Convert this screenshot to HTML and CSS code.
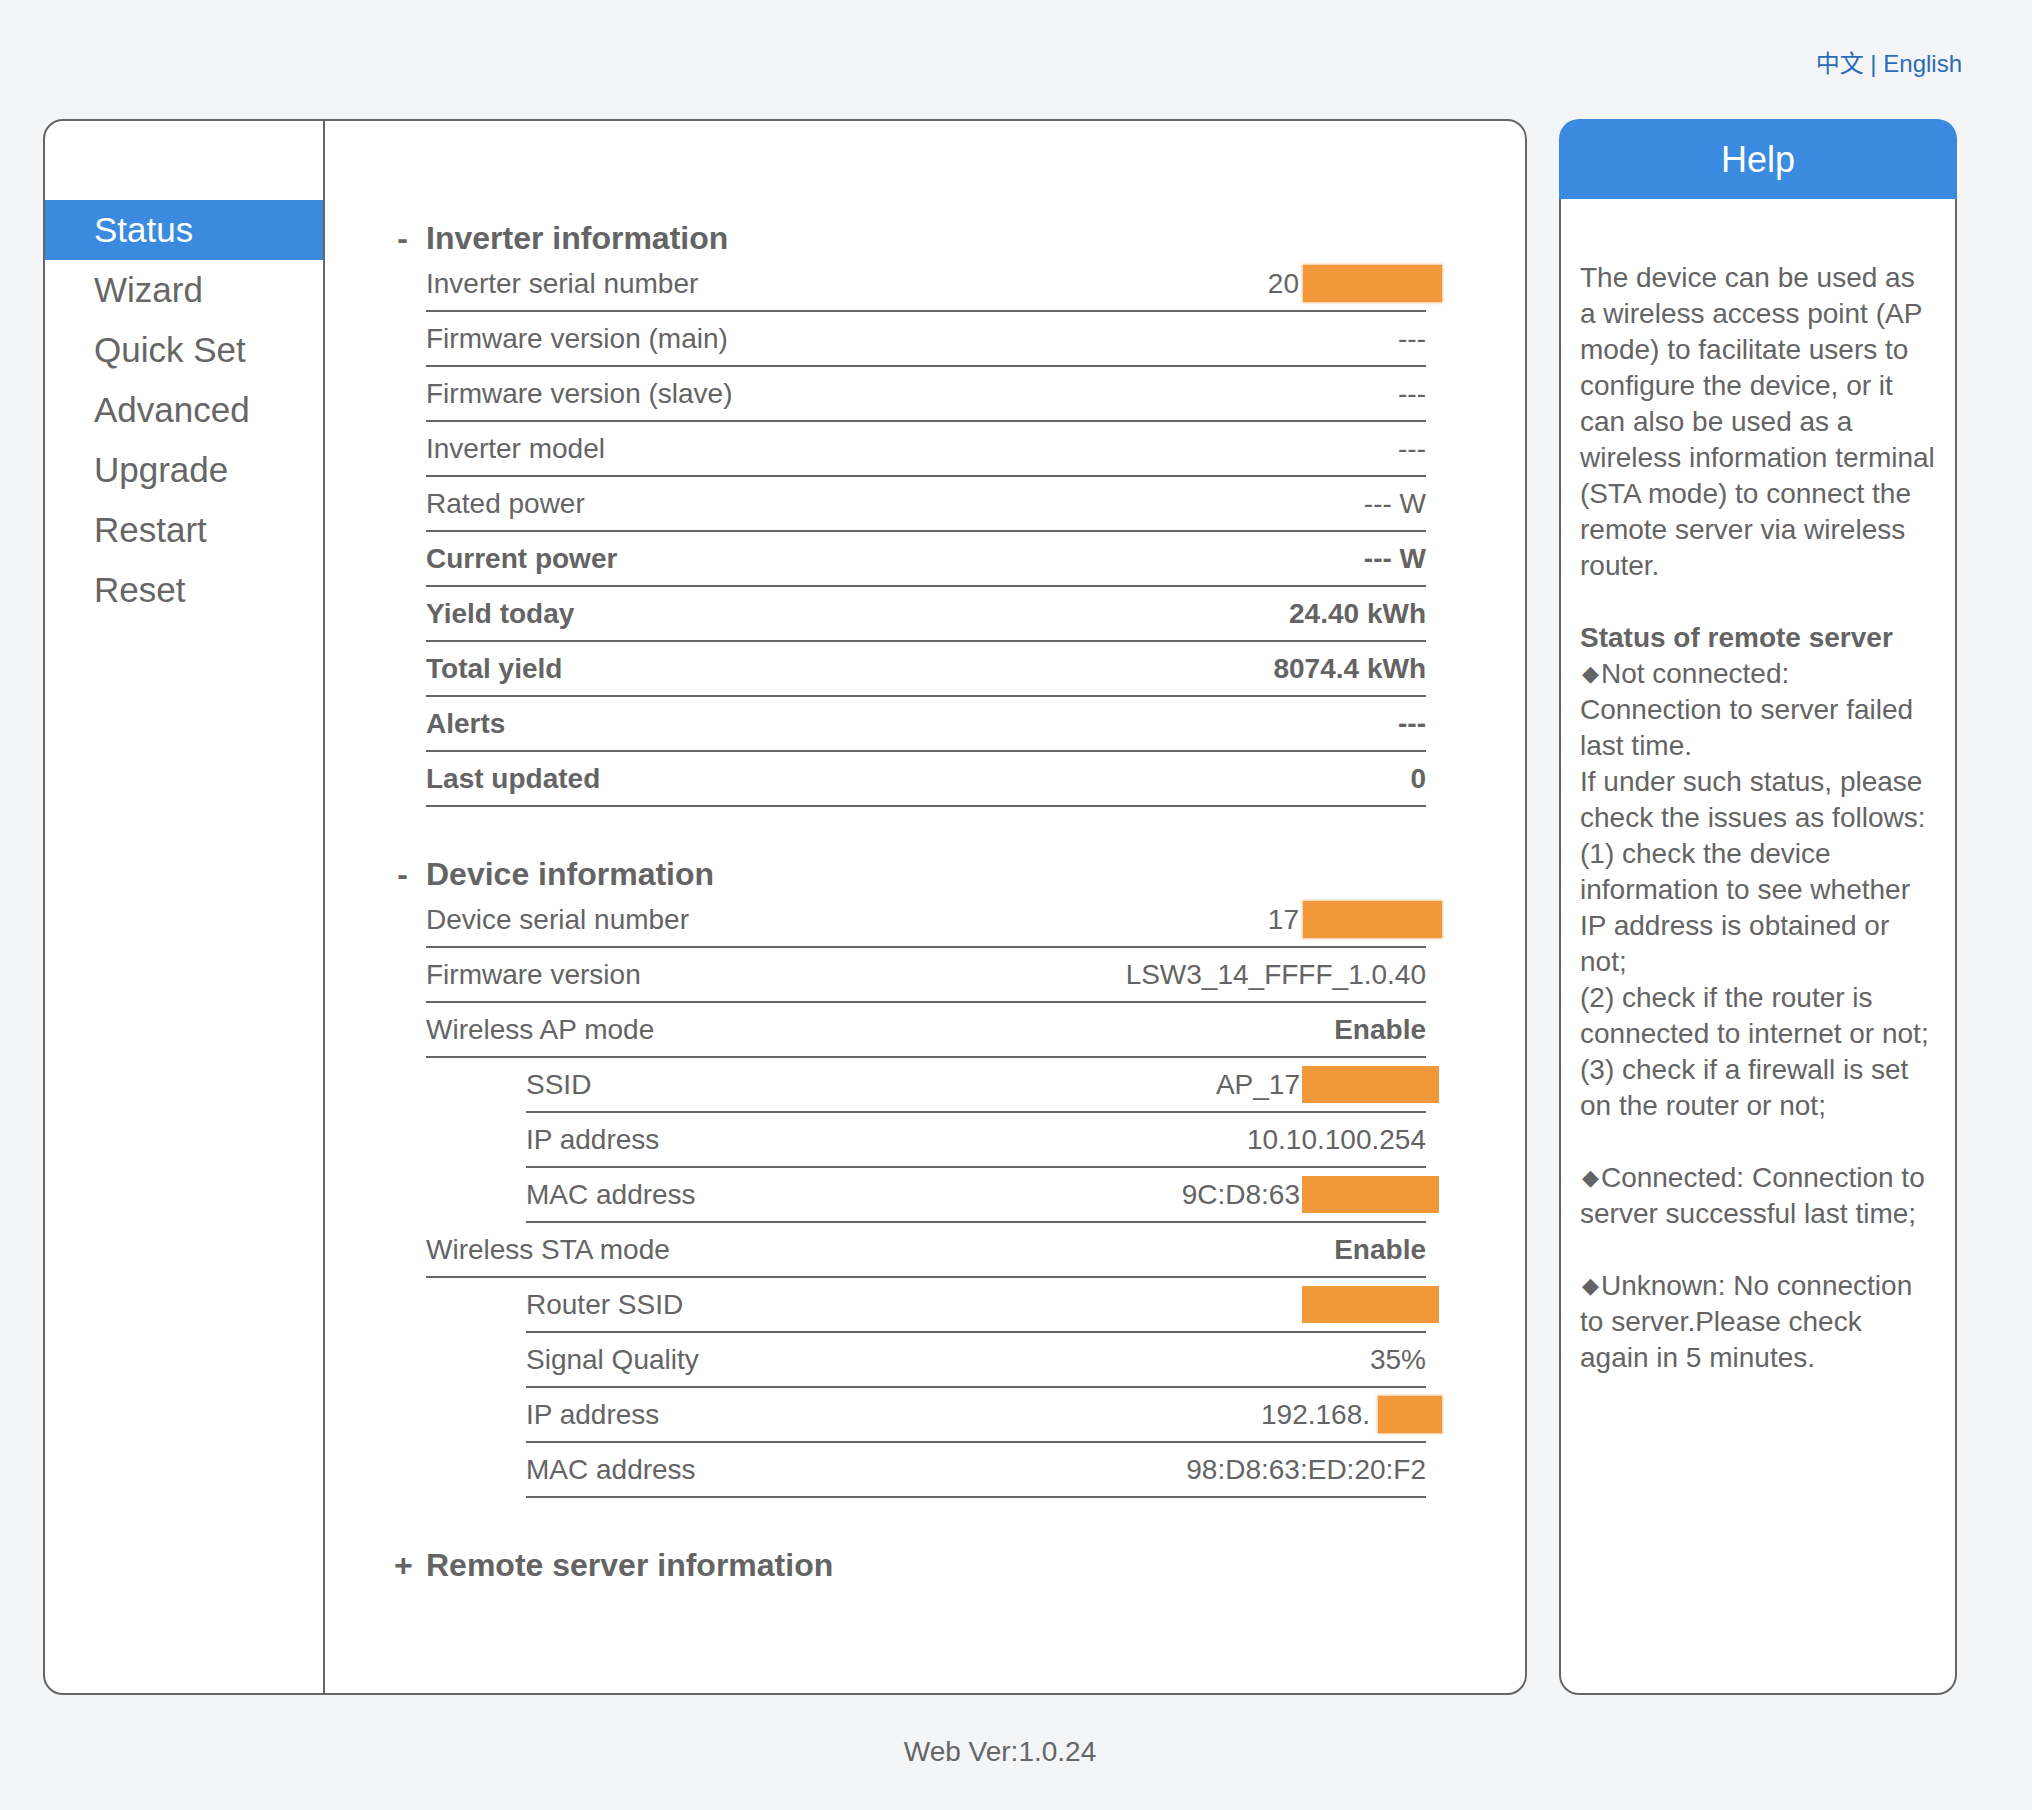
FILE: index.html
```html
<!DOCTYPE html>
<html lang="en">
<head>
<meta charset="utf-8">
<title>Status</title>
<link rel="stylesheet" href="styles.css">
</head>
<body>
<div class="page">
  <div class="lang"><a class="lang-link">中文</a> | <a class="lang-link">English</a></div>
  <div class="layout">
    <div class="main-box">
      <nav class="sidebar">
        <a class="nav-item active">Status</a>
        <a class="nav-item">Wizard</a>
        <a class="nav-item">Quick Set</a>
        <a class="nav-item">Advanced</a>
        <a class="nav-item">Upgrade</a>
        <a class="nav-item">Restart</a>
        <a class="nav-item">Reset</a>
      </nav>
      <div class="content">
        <section class="section">
          <h2 class="sec-title"><span class="sign">-</span>Inverter information</h2>
          <div class="rows">
            <div class="row"><span class="label">Inverter serial number</span><span class="value">20<span class="redact fuzzy serial"></span></span></div>
            <div class="row"><span class="label">Firmware version (main)</span><span class="value">---</span></div>
            <div class="row"><span class="label">Firmware version (slave)</span><span class="value">---</span></div>
            <div class="row"><span class="label">Inverter model</span><span class="value">---</span></div>
            <div class="row"><span class="label">Rated power</span><span class="value">--- W</span></div>
            <div class="row strong"><span class="label">Current power</span><span class="value">--- W</span></div>
            <div class="row strong"><span class="label">Yield today</span><span class="value">24.40 kWh</span></div>
            <div class="row strong"><span class="label">Total yield</span><span class="value">8074.4 kWh</span></div>
            <div class="row strong"><span class="label">Alerts</span><span class="value">---</span></div>
            <div class="row strong"><span class="label">Last updated</span><span class="value">0</span></div>
          </div>
        </section>
        <section class="section">
          <h2 class="sec-title"><span class="sign">-</span>Device information</h2>
          <div class="rows">
            <div class="row"><span class="label">Device serial number</span><span class="value">17<span class="redact fuzzy serial"></span></span></div>
            <div class="row"><span class="label">Firmware version</span><span class="value">LSW3_14_FFFF_1.0.40</span></div>
            <div class="row"><span class="label">Wireless AP mode</span><span class="value bold">Enable</span></div>
            <div class="row sub"><span class="label">SSID</span><span class="value">AP_17<span class="redact solid"></span></span></div>
            <div class="row sub"><span class="label">IP address</span><span class="value">10.10.100.254</span></div>
            <div class="row sub"><span class="label">MAC address</span><span class="value">9C:D8:63<span class="redact solid"></span></span></div>
            <div class="row"><span class="label">Wireless STA mode</span><span class="value bold">Enable</span></div>
            <div class="row sub"><span class="label">Router SSID</span><span class="value"><span class="redact solid"></span></span></div>
            <div class="row sub"><span class="label">Signal Quality</span><span class="value">35%</span></div>
            <div class="row sub"><span class="label">IP address</span><span class="value">192.168.<span class="redact fuzzy short"></span></span></div>
            <div class="row sub"><span class="label">MAC address</span><span class="value">98:D8:63:ED:20:F2</span></div>
          </div>
        </section>
        <section class="section">
          <h2 class="sec-title"><span class="sign">+</span>Remote server information</h2>
        </section>
      </div>
    </div>
    <aside class="help">
      <div class="help-head">Help</div>
      <div class="help-body">
        <p class="help-text">The device can be used as a wireless access point (AP mode) to facilitate users to configure the device, or it can also be used as a wireless information terminal (STA mode) to connect the remote server via wireless router.</p>
        <p class="help-text"><b>Status of remote server</b><br><span class="dia">◆</span>Not connected:<br>Connection to server failed last time.<br>If under such status, please check the issues as follows:<br>(1) check the device information to see whether IP address is obtained or not;<br>(2) check if the router is connected to internet or not;<br>(3) check if a firewall is set on the router or not;</p>
        <p class="help-text"><span class="dia">◆</span>Connected: Connection to server successful last time;</p>
        <p class="help-text"><span class="dia">◆</span>Unknown: No connection to server.Please check again in 5 minutes.</p>
      </div>
    </aside>
  </div>
  <div class="footer">Web Ver:1.0.24</div>
</div>
</body>
</html>
```
FILE: styles.css
```css
body {
  margin: 0;
  background: #f4f5f7;
  font-family: "Liberation Sans", Arial, "Noto Sans CJK SC", sans-serif;
  color: #646464;
}

.page {
  padding: 50px 0 0 43px;
  width: 1919px;
}

.lang {
  text-align: right;
  font-size: 24px;
  line-height: 28px;
  color: #2b6cb8;
  font-family: "Liberation Sans", Arial, "Noto Sans CJK SC", sans-serif;
}

.lang-link {
  color: #2b6cb8;
  text-decoration: none;
}

.layout {
  display: flex;
  gap: 32px;
  margin-top: 41px;
}

.main-box {
  width: 1484px;
  height: 1576px;
  box-sizing: border-box;
  border: 2px solid #666666;
  border-radius: 20px;
  background: #ffffff;
  display: flex;
  overflow: hidden;
}

.sidebar {
  width: 280px;
  flex: none;
  box-sizing: border-box;
  border-right: 2px solid #666666;
  padding-top: 79px;
}

.nav-item {
  display: block;
  height: 60px;
  line-height: 60px;
  padding-left: 49px;
  font-size: 35px;
  color: #666666;
}

.nav-item.active {
  background: #3a8be0;
  color: #ffffff;
}

.content {
  flex: 1;
  padding: 99px 0 0 69px;
}

.section + .section {
  margin-top: 49px;
}

.sec-title {
  margin: 0;
  font-size: 32px;
  font-weight: bold;
  line-height: 37px;
  display: flex;
}

.sign {
  width: 17px;
  margin-right: 15px;
  text-align: center;
  flex: none;
}

.rows {
  margin-left: 32px;
  width: 1000px;
}

.row {
  display: flex;
  justify-content: space-between;
  align-items: center;
  height: 53px;
  border-bottom: 2px solid #666666;
  font-size: 28px;
}

.row.sub {
  margin-left: 100px;
}

.row.strong {
  font-weight: bold;
}

.value {
  display: flex;
  align-items: center;
  white-space: pre;
}

.value.bold {
  font-weight: bold;
}

.redact {
  display: inline-block;
  height: 37px;
  background: #f0983a;
}

.redact.fuzzy {
  box-shadow: 0 0 2px 1px rgba(240, 152, 58, 0.55);
}

.redact.serial {
  width: 139px;
  margin-left: 4px;
  margin-right: -16px;
}

.redact.solid {
  width: 137px;
  margin-left: 2px;
  margin-right: -13px;
}

.redact.short {
  width: 64px;
  margin-left: 8px;
  margin-right: -16px;
}

.help {
  width: 398px;
  height: 1576px;
  display: flex;
  flex-direction: column;
}

.help-head {
  height: 80px;
  flex: none;
  background: #3a8be0;
  border-radius: 20px 20px 0 0;
  color: #ffffff;
  font-size: 36px;
  padding-top: 2px;
  box-sizing: border-box;
  display: flex;
  align-items: center;
  justify-content: center;
}

.help-body {
  flex: 1;
  background: #ffffff;
  border: 2px solid #666666;
  border-top: 0;
  border-radius: 0 0 20px 20px;
  padding: 61px 19px 0 19px;
}

.help-text {
  width: 356px;
  margin: 0 0 36px 0;
  font-size: 28px;
  line-height: 36px;
}

.dia {
  display: inline-block;
  font-family: "DejaVu Sans", sans-serif;
  font-size: 22px;
  line-height: 20px;
  vertical-align: 2px;
  margin-left: 2px;
  margin-right: 2px;
}

.footer {
  width: 1914px;
  text-align: center;
  font-size: 28px;
  line-height: 32px;
  margin-top: 41px;
  color: #666666;
}
```
